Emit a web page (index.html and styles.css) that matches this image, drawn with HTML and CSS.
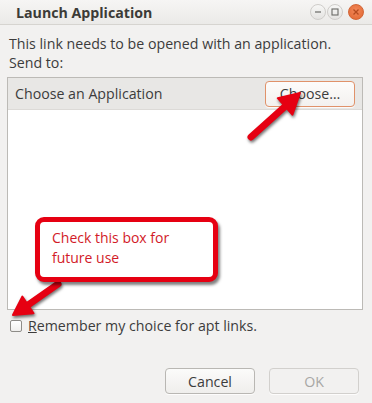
FILE: index.html
```html
<!DOCTYPE html>
<html lang="en">
<head>
  <meta charset="UTF-8">
  <title>Launch Application</title>
  <link rel="stylesheet" href="styles.css">
</head>
<body>
  <div class="window">
    <div class="titlebar">
      <span class="title">Launch Application</span>
      <div class="controls">
        <span class="ctl min"><svg width="8" height="8" viewBox="0 0 8 8"><path d="M1 4h6" stroke="#6a6a66" stroke-width="1.2"/></svg></span>
        <span class="ctl max"><svg width="8" height="8" viewBox="0 0 8 8"><rect x="1" y="1" width="6" height="6" fill="none" stroke="#6a6a66" stroke-width="1.1"/></svg></span>
        <span class="ctl close"><svg width="8" height="8" viewBox="0 0 8 8"><path d="M1.5 1.5l5 5M6.5 1.5l-5 5" stroke="#b44a1e" stroke-width="1.3"/></svg></span>
      </div>
    </div>
    <div class="content">
      <p class="line">This link needs to be opened with an application.</p>
      <p class="line">Send to:</p>
      <div class="list">
        <div class="list-head">
          <span>Choose an Application</span>
          <button class="btn choose"><u>C</u>hoose…</button>
        </div>
        <div class="list-body"></div>
      </div>
      <label class="remember"><span class="check"></span><span><u>R</u>emember my choice for apt links.</span></label>
      <div class="actions">
        <button class="btn">Cancel</button>
        <button class="btn" disabled>OK</button>
      </div>
    </div>

    <!-- annotations drawn on top of the screenshot -->
    <svg class="arrows" width="372" height="403" viewBox="0 0 372 403">
      <g class="arrow">
        <line x1="251" y1="137" x2="285" y2="106.5" stroke="#e60012" stroke-width="7" stroke-linecap="round"/>
        <polygon points="300,93 292.4,114.6 277.8,98.2" fill="#e60012" stroke="#e60012" stroke-width="2" stroke-linejoin="round"/>
      </g>
      <g class="arrow">
        <line x1="58" y1="284" x2="28" y2="305" stroke="#e60012" stroke-width="7" stroke-linecap="round"/>
        <polygon points="13,315 33.5,313.2 22.3,296.6" fill="#e60012" stroke="#e60012" stroke-width="2" stroke-linejoin="round"/>
      </g>
    </svg>
    <div class="callout">Check this box for<br>future use</div>
  </div>
</body>
</html>
```

FILE: styles.css
```css
*{margin:0;padding:0;box-sizing:border-box}
body{width:372px;height:403px;overflow:hidden;background:#f2f1f0;font-family:"Open Sans","DejaVu Sans",sans-serif;font-size:14.2px;color:#3c3c3c}
.window{position:relative;width:372px;height:403px}

.titlebar{height:25px;display:flex;align-items:center;justify-content:space-between;padding:0 8px 0 16px;background:linear-gradient(#f6f5f4,#ebeae8);border-bottom:1px solid #d6d4d0}
.title{font-weight:bold;font-size:14.2px;color:#3c3b37}
.controls{display:flex;gap:1px;align-items:center}
.ctl{width:16px;height:16px;border-radius:50%;display:flex;align-items:center;justify-content:center;background:linear-gradient(#f7f7f6,#e4e3e1);border:1px solid #cfcdca}
.ctl.close{margin-left:4px;background:radial-gradient(circle at 50% 40%,#f3885a,#e0662f);border-color:#d26536}

.content{padding:9px 9px 0 7px}
.line{line-height:19px;padding-left:2px}
.list{margin-top:5px;width:356px;height:233px;border:1px solid #bcbab6;background:#fff;display:flex;flex-direction:column}
.list-head{height:32px;background:#e8e7e5;border-bottom:1px solid #dcdad7;display:flex;align-items:center;justify-content:space-between;padding:0 7px 0 7px}

.btn{font-family:inherit;font-size:14.2px;color:#3c3c3c;height:26px;width:90px;border:1px solid #b9b7b3;border-radius:4px;background:linear-gradient(#fbfbfa,#efeeec);box-shadow:0 1px 0 rgba(255,255,255,.8)}
.btn u{text-decoration-thickness:1px}
.choose{width:90px;border-color:#e0926a;background:linear-gradient(#fdfcfb,#f3f1ef)}
.btn:disabled{color:#a8a7a5;border-color:#d2d0cd;background:#f2f1f0}

.remember{display:flex;align-items:center;gap:6px;margin-top:9px;padding-left:3px;line-height:13px}
.check{width:12px;height:12px;border:1px solid #8e8c88;border-radius:2px;background:linear-gradient(#fff,#f0efed)}

.actions{display:flex;justify-content:flex-end;gap:14px;margin-top:36px;padding-right:4px}

.arrows{position:absolute;left:0;top:0;pointer-events:none}
.arrow{filter:drop-shadow(1px 2px 1.5px rgba(0,0,0,.55))}
.callout{position:absolute;left:35px;top:217px;width:183px;height:65px;border:5px solid #e60012;border-radius:9px;background:#fff;box-shadow:2px 3px 3px rgba(0,0,0,.5);color:#d21a28;font-size:14px;line-height:20px;padding:6px 0 0 12px}
```
